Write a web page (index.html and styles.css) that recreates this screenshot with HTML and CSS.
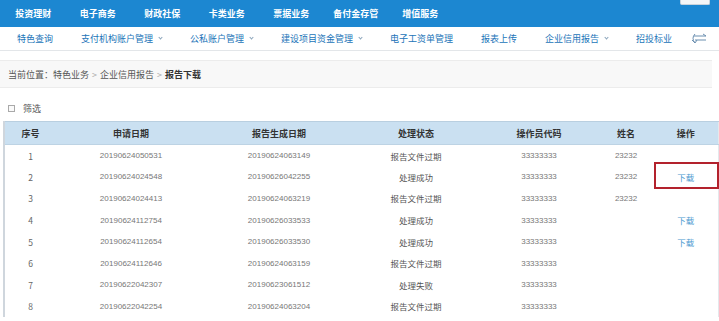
FILE: index.html
```html
<!DOCTYPE html>
<html lang="zh-CN">
  <head>
    <meta charset="UTF-8" />
    <title>报告下载</title>
    <link rel="stylesheet" href="styles.css">
  </head>
  <body>
    <div class="topbar">
      <a class="top-item">投资理财</a>
      <a class="top-item">电子商务</a>
      <a class="top-item">财政社保</a>
      <a class="top-item">卡类业务</a>
      <a class="top-item">票据业务</a>
      <a class="top-item">备付金存管</a>
      <a class="top-item">增值服务</a>
      <span class="top-tab"></span>
    </div>

    <div class="subnav">
      <a class="sub-item">特色查询</a>
      <a class="sub-item">支付机构账户管理<i class="caret"></i></a>
      <a class="sub-item">公私账户管理<i class="caret"></i></a>
      <a class="sub-item">建设项目资金管理<i class="caret"></i></a>
      <a class="sub-item">电子工资单管理</a>
      <a class="sub-item">报表上传</a>
      <a class="sub-item">企业信用报告<i class="caret"></i></a>
      <a class="sub-item">招投标业</a>
      <svg class="swap-icon" width="18" height="12" viewBox="0 0 18 12">
        <path d="M4 3 L16 3 M13 1 L16 3" fill="none" stroke="#6b8fb0" stroke-width="1" />
        <path d="M5 1 Q1 5 5 10 M2 7 L5 10 L7 7" fill="none" stroke="#6b8fb0" stroke-width="1" />
        <path d="M5 7 L16 7" fill="none" stroke="#6b8fb0" stroke-width="1" />
      </svg>
    </div>

    <div class="crumb">
      当前位置：特色业务 <span class="sep">&gt;</span> 企业信用报告 <span class="sep">&gt;</span> <b>报告下载</b>
    </div>

    <label class="filter"><span class="box"></span>筛选</label>

    <table class="grid">
      <colgroup>
        <col class="c-no" />
        <col class="c-apply" />
        <col class="c-gen" />
        <col class="c-state" />
        <col class="c-op" />
        <col class="c-name" />
        <col class="c-act" />
      </colgroup>
      <thead>
        <tr>
          <th>序号</th>
          <th>申请日期</th>
          <th>报告生成日期</th>
          <th>处理状态</th>
          <th>操作员代码</th>
          <th>姓名</th>
          <th>操作</th>
        </tr>
      </thead>
      <tbody>
        <tr><td>1</td><td class="num">20190624050531</td><td class="num">20190624063149</td><td class="state">报告文件过期</td><td class="num">33333333</td><td class="num">23232</td><td></td></tr>
        <tr><td>2</td><td class="num">20190624024548</td><td class="num">20190626042255</td><td class="state">处理成功</td><td class="num">33333333</td><td class="num">23232</td><td class="marked"><a class="dl">下载</a></td></tr>
        <tr><td>3</td><td class="num">20190624024413</td><td class="num">20190624063219</td><td class="state">报告文件过期</td><td class="num">33333333</td><td class="num">23232</td><td></td></tr>
        <tr><td>4</td><td class="num">20190624112754</td><td class="num">20190626033533</td><td class="state">处理成功</td><td class="num">33333333</td><td></td><td><a class="dl">下载</a></td></tr>
        <tr><td>5</td><td class="num">20190624112654</td><td class="num">20190626033530</td><td class="state">处理成功</td><td class="num">33333333</td><td></td><td><a class="dl">下载</a></td></tr>
        <tr><td>6</td><td class="num">20190624112646</td><td class="num">20190624063159</td><td class="state">报告文件过期</td><td class="num">33333333</td><td></td><td></td></tr>
        <tr><td>7</td><td class="num">20190622042307</td><td class="num">20190623061512</td><td class="state">处理失败</td><td class="num">33333333</td><td></td><td></td></tr>
        <tr><td>8</td><td class="num">20190622042254</td><td class="num">20190624063204</td><td class="state">报告文件过期</td><td class="num">33333333</td><td></td><td></td></tr>
      </tbody>
    </table>
  </body>
</html>
```

FILE: styles.css
```css
:root {
  --blue: #1c87d1;
  --link: #2274b8;
  --head-bg: #cae0f1;
  --line: #d6dde4;
  --text: #666;
}

* {
  box-sizing: border-box;
}

body {
  margin: 0;
  background: #fff;
  font-family: "Noto Sans CJK SC", "Liberation Sans", sans-serif;
  color: var(--text);
  overflow: hidden;
}

a {
  text-decoration: none;
}

/* top menu */
.topbar {
  display: flex;
  align-items: flex-start;
  height: 27px;
  padding-left: 1px;
  background: var(--blue);
}

.top-item {
  width: 64.5px;
  line-height: 27px;
  text-align: center;
  font-size: 9px;
  font-weight: bold;
  color: #fff;
}

.top-tab {
  width: 30px;
  height: 5px;
  margin-left: auto;
  margin-right: 9px;
  background: #f4f6f8;
  border: 1px solid #c9d3dc;
  border-top: none;
  border-radius: 0 0 2px 2px;
}

/* second menu */
.subnav {
  display: flex;
  align-items: center;
  gap: 28px;
  height: 24px;
  padding-left: 17px;
  border-bottom: 1px solid #e3e6e9;
  background: #fff;
}

.sub-item {
  display: flex;
  align-items: center;
  font-size: 9px;
  color: var(--link);
  white-space: nowrap;
}

.caret {
  width: 3px;
  height: 3px;
  margin: 0 0 2px 6px;
  border-right: 1px solid #8aa4bb;
  border-bottom: 1px solid #8aa4bb;
  transform: rotate(45deg);
}

.swap-icon {
  margin-left: -10px;
}

/* breadcrumb */
.crumb {
  margin: 9px 7px 0 0;
  height: 28px;
  padding-left: 8px;
  line-height: 27px;
  font-size: 9px;
  color: #555;
  background: #f8f8f8;
  border-top: 1px solid #ececec;
  border-bottom: 1px solid #ececec;
}

.crumb .sep {
  color: #aaa;
  margin: 0 1px;
}

.crumb b {
  color: #333;
}

/* filter */
.filter {
  display: flex;
  align-items: center;
  gap: 8px;
  height: 14px;
  margin: 13px 0 6px 8px;
  font-size: 9px;
  color: #555;
}

.filter .box {
  width: 7px;
  height: 7px;
  border: 1px solid #a9a9a9;
  background: #fafafa;
}

/* table */
.grid {
  width: 714px;
  margin-left: 3px;
  border-collapse: collapse;
  table-layout: fixed;
  border-left: 2px solid #cfd6dd;
  border-right: 1px solid #e4e8ec;
}

.c-no { width: 52px; }
.c-apply { width: 150px; }
.c-gen { width: 146px; }
.c-state { width: 128px; }
.c-op { width: 118px; }
.c-name { width: 56px; }
.c-act { width: 64px; }

.grid th {
  height: 23px;
  font-size: 9px;
  font-weight: bold;
  color: #333;
  background: var(--head-bg);
  border-top: 1px solid #b9cfe0;
  border-bottom: 1px solid #bdd3e4;
}

.grid td {
  height: 21.6px;
  padding: 0;
  text-align: center;
  font-size: 8.5px;
  color: var(--text);
}

.grid td.num {
  font-family: "Liberation Sans", sans-serif;
  font-size: 8px;
  color: #777;
}

.grid td.state {
  color: #555;
}

.dl {
  color: #4a98cf;
  font-size: 8.5px;
}

.marked {
  position: relative;
}

.marked::after {
  content: "";
  position: absolute;
  top: -4px;
  bottom: -1px;
  left: 0;
  right: -1px;
  border: 2px solid #b3222d;
}
```
